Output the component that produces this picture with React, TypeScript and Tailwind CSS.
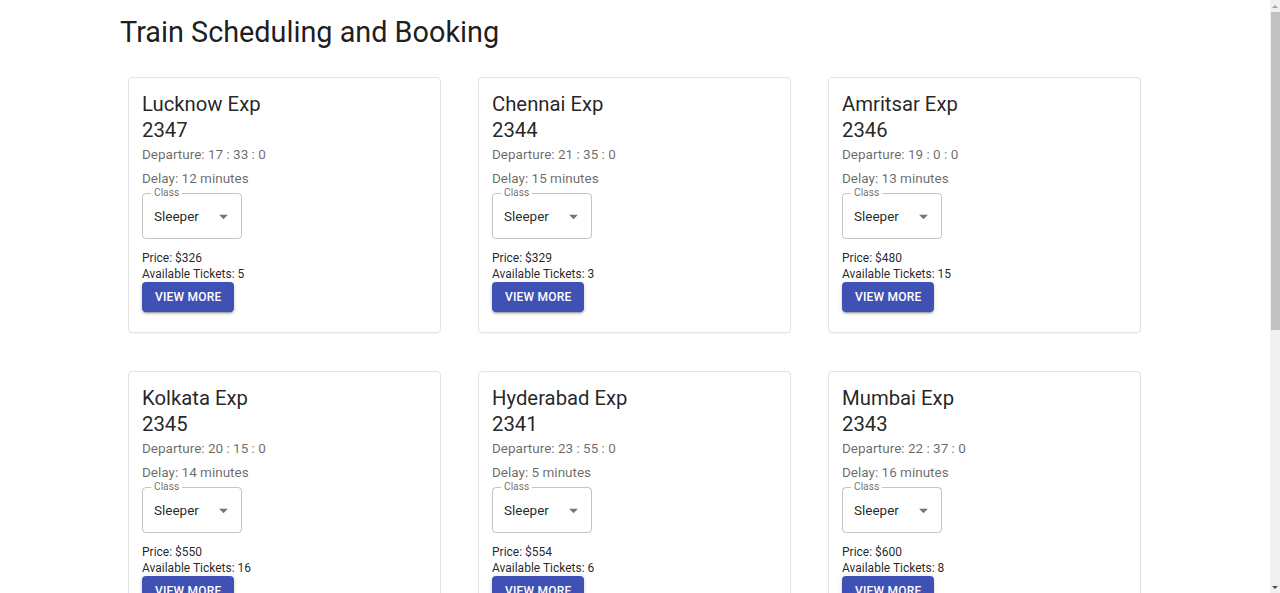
import React from "react";

type Train = {
  name: string;
  num: string;
  dep: string;
  delay: number;
  price: number;
  tickets: number;
};

const trains: Train[] = [
  { name: "Lucknow Exp", num: "2347", dep: "17 : 33 : 0", delay: 12, price: 326, tickets: 5 },
  { name: "Chennai Exp", num: "2344", dep: "21 : 35 : 0", delay: 15, price: 329, tickets: 3 },
  { name: "Amritsar Exp", num: "2346", dep: "19 : 0 : 0", delay: 13, price: 480, tickets: 15 },
  { name: "Kolkata Exp", num: "2345", dep: "20 : 15 : 0", delay: 14, price: 550, tickets: 16 },
  { name: "Hyderabad Exp", num: "2341", dep: "23 : 55 : 0", delay: 5, price: 554, tickets: 6 },
  { name: "Mumbai Exp", num: "2343", dep: "22 : 37 : 0", delay: 16, price: 600, tickets: 8 },
];

function TrainCard({ t }: { t: Train }) {
  return (
    <div className="flex flex-col border border-[#e2e2e2] rounded-[4px] bg-white pt-[13px] px-[13px] pb-[20px] shadow-[0_1px_2px_rgba(0,0,0,0.04)]">
      <div className="text-[20.3px] leading-[26px] text-[rgba(0,0,0,0.87)]">
        <div>{t.name}</div>
        <div>{t.num}</div>
      </div>
      <div className="mt-[1px] text-[13.5px] leading-[20px] text-[rgba(0,0,0,0.6)]">Departure: {t.dep}</div>
      <div className="mt-[4px] text-[13.5px] leading-[20px] text-[rgba(0,0,0,0.6)]">Delay: {t.delay} minutes</div>
      <div className="mt-[5px] relative w-[100px] h-[46px] border border-[rgba(0,0,0,0.23)] rounded-[4px] flex items-center pl-[11px] pr-[8px]">
        <span className="absolute left-[8px] top-[-8px] bg-white px-[3px] text-[10.2px] leading-[14px] text-[rgba(0,0,0,0.6)]">Class</span>
        <span className="flex-1 text-[13.5px] leading-[20px] text-[rgba(0,0,0,0.87)]">Sleeper</span>
        <svg width="21" height="21" viewBox="0 0 24 24" className="shrink-0 mr-[-1px]">
          <path d="M7 10l5 5 5-5z" fill="rgba(0,0,0,0.54)" />
        </svg>
      </div>
      <div className="mt-[11px] text-[12px] leading-[16px] text-[rgba(0,0,0,0.87)]">Price: ${t.price}</div>
      <div className="text-[12px] leading-[16px] text-[rgba(0,0,0,0.87)]">Available Tickets: {t.tickets}</div>
      <div className="flex">
        <button className="h-[30px] px-[13px] rounded-[4px] bg-[#3f51b5] text-white text-[12px] font-medium tracking-[0.2px] uppercase shadow-[0_3px_1px_-2px_rgba(0,0,0,0.2),0_2px_2px_0_rgba(0,0,0,0.14),0_1px_5px_0_rgba(0,0,0,0.12)]">
          View More
        </button>
      </div>
    </div>
  );
}

export default function App() {
  return (
    <div className="flex h-[593px] overflow-hidden bg-white" style={{ fontFamily: "Roboto, 'Liberation Sans', sans-serif" }}>
      <div className="flex-1 min-w-0">
        <div className="w-[1030px] mx-auto">
          <h1 className="mt-[14px] text-[28.8px] leading-[36px] font-normal text-[rgba(0,0,0,0.9)]">Train Scheduling and Booking</h1>
          <div className="mt-[27px] pl-[8px] grid grid-cols-[313px_313px_313px] gap-x-[37px] gap-y-[38px]">
            {trains.map((t) => (
              <TrainCard key={t.num} t={t} />
            ))}
          </div>
        </div>
      </div>
      <div className="w-[10px] h-[593px] bg-[#f1f1f1] flex flex-col items-stretch shrink-0">
        <div className="h-[12px] flex items-center justify-center">
          <div className="w-0 h-0 border-l-[3px] border-r-[3px] border-b-[3px] border-l-transparent border-r-transparent border-b-[#a3a3a3]" />
        </div>
        <div className="h-[318px] bg-[#c1c1c1] ml-[1px]" />
        <div className="flex-1" />
        <div className="h-[12px] flex items-center justify-center">
          <div className="w-0 h-0 border-l-[3px] border-r-[3px] border-t-[3px] border-l-transparent border-r-transparent border-t-[#505050]" />
        </div>
      </div>
    </div>
  );
}
